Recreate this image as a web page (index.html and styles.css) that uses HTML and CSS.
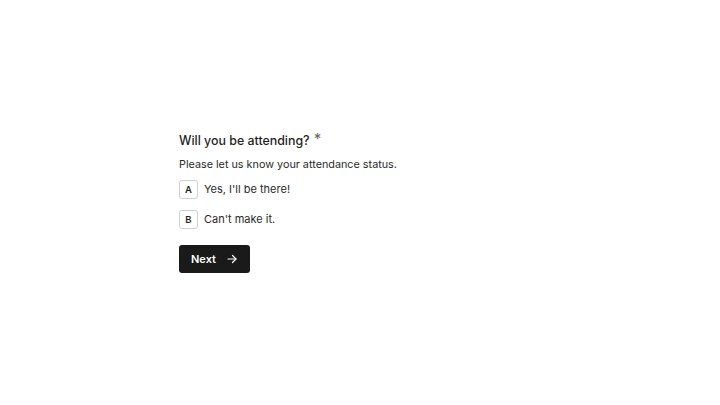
FILE: index.html
```html
<!DOCTYPE html>
<html lang="en">
<head>
    <meta charset="UTF-8">
    <meta name="viewport" content="width=device-width, initial-scale=1.0">
    <title>Attendance</title>
    <link rel="stylesheet" href="styles.css">
</head>
<body>
    <div class="form-wrap">
        <div class="question">
            <h2 class="question-title">Will you be attending?<span class="required">*</span></h2>
            <p class="question-desc">Please let us know your attendance status.</p>
            <div class="options">
                <div class="option">
                    <span class="option-key">A</span>
                    <span class="option-label">Yes, I'll be there!</span>
                </div>
                <div class="option">
                    <span class="option-key">B</span>
                    <span class="option-label">Can't make it.</span>
                </div>
            </div>
            <button class="next-btn">
                Next
                <svg width="12" height="12" viewBox="0 0 24 24" fill="none" stroke="currentColor" stroke-width="2.4" stroke-linecap="round" stroke-linejoin="round">
                    <path d="M4 12h16"/>
                    <path d="M13 5l7 7-7 7"/>
                </svg>
            </button>
        </div>
    </div>
</body>
</html>
```

FILE: styles.css
```css
body {
    font-family: Inter, 'Noto Sans', sans-serif;
    margin: 0;
    background: #fff;
    color: #1f1f1f;
}

.form-wrap {
    width: 720px;
    height: 405px;
    box-sizing: border-box;
    padding-bottom: 2px;
    display: flex;
    align-items: center;
}

.question {
    margin-left: 179px;
}

.question-title {
    font-size: 12.4px;
    font-weight: 500;
    margin: 0 0 6px 0;
    line-height: 18px;
    color: #1f1f1f;
}

.required {
    font-size: 15px;
    margin-left: 4px;
    position: relative;
    top: -1px;
    color: #666;
    font-weight: 400;
}

.question-desc {
    font-size: 10.8px;
    margin: 0 0 6px 0;
    line-height: 18px;
    color: #2a2a2a;
}

.options {
    display: flex;
    flex-direction: column;
    gap: 11px;
    margin-bottom: 16px;
}

.option {
    display: flex;
    align-items: center;
    gap: 6px;
}

.option-key {
    width: 17px;
    height: 17px;
    border: 1px solid #cfcfcf;
    border-radius: 3px;
    display: flex;
    align-items: center;
    justify-content: center;
    font-size: 9.5px;
    font-weight: 600;
    color: #1f1f1f;
}

.option-label {
    font-size: 11px;
    color: #2a2a2a;
}

.next-btn {
    font-family: inherit;
    display: flex;
    align-items: center;
    gap: 10px;
    background: #1a1a1a;
    color: #fff;
    border: none;
    border-radius: 3px;
    height: 28px;
    padding: 0 12px;
    font-size: 11px;
    font-weight: 600;
}
```
